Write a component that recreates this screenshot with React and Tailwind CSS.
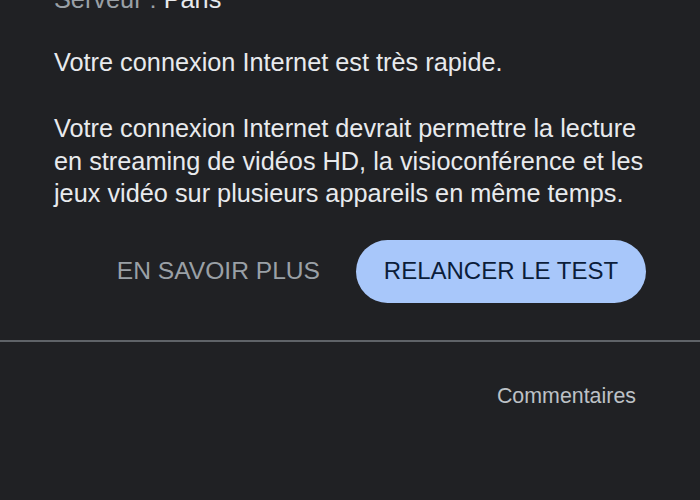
import React from "react";

const App = () => {
  return (
    <div
      className="w-[700px] h-[500px] overflow-hidden bg-[#202124] text-[#e8eaed]"
      style={{ fontFamily: '"Liberation Sans", Arial, sans-serif' }}
    >
      <div className="px-[54px]">
        {/* server line, cut by top edge */}
        <p className="-mt-[17px] text-[25.3px] leading-[32px]">
          <span className="text-[#9aa0a6]">Serveur : </span>
          <span>Paris</span>
        </p>

        <p className="mt-[31px] text-[25.3px] leading-[32px]">
          Votre connexion Internet est très rapide.
        </p>

        <p className="mt-[34px] text-[25.3px] leading-[32.5px]">
          Votre connexion Internet devrait permettre la lecture en streaming de vidéos HD, la visioconférence et les jeux vidéo sur plusieurs appareils en même temps.
        </p>
      </div>

      {/* actions */}
      <div className="mt-[30px] pr-[54px] flex justify-end items-center gap-[36px]">
        <button className="text-[24.6px] text-[#9aa0a6]">
          EN SAVOIR PLUS
        </button>
        <button className="h-[63px] w-[290px] rounded-full bg-[#a8c7fa] text-[24px] text-[#0b1d3a]">
          RELANCER LE TEST
        </button>
      </div>

      <div className="mt-[37px] h-[2px] bg-[#5f6368]" />

      <div className="flex justify-end pr-[64px] mt-[39px]">
        <span className="text-[21.4px] leading-[30px] text-[#bdc1c6]">Commentaires</span>
      </div>
    </div>
  );
};

export default App;
